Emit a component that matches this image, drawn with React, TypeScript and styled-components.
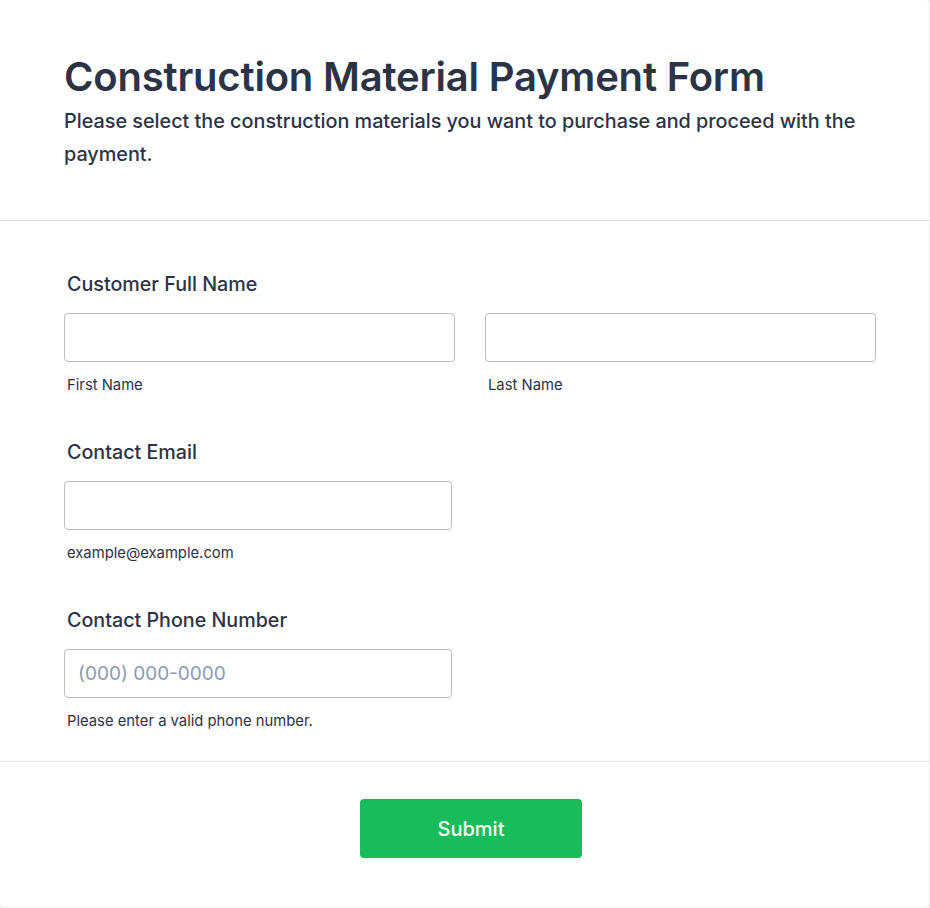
import styled, { createGlobalStyle } from 'styled-components'

const GlobalStyle = createGlobalStyle`
  html, body {
    margin: 0;
    padding: 0;
    background: #f3f3f7;
    font-family: Inter, 'Noto Sans', sans-serif;
    color: #2c3345;
  }
  * {
    box-sizing: border-box;
  }
`

const Card = styled.div`
  width: 929px;
  height: 907px;
  background: #ffffff;
  border-radius: 0 3px 3px 3px;
  box-shadow: 0 0 1px rgba(42, 49, 73, 0.25);
`

const Header = styled.div`
  padding: 53px 64px 49px 64px;
  border-bottom: 1px solid #d8dae3;
`

const Title = styled.h1`
  margin: 0;
  font-size: 40px;
  line-height: 48px;
  font-weight: 600;
  letter-spacing: -0.2px;
  color: #2c3345;
`

const Subtitle = styled.p`
  margin: 4px 0 0;
  font-size: 19.8px;
  line-height: 33px;
  font-weight: 500;
  color: #2c3345;
`

const Fields = styled.div`
  padding: 51px 54px 31px 64px;
  display: flex;
  flex-direction: column;
  gap: 46px;
  border-bottom: 1px solid #e6e7ec;
`

const Field = styled.div`
  display: flex;
  flex-direction: column;
`

const Label = styled.label`
  padding-left: 3px;
  font-size: 19.7px;
  line-height: 24px;
  font-weight: 500;
  color: #2c3345;
  margin-bottom: 17px;
`

const Row = styled.div`
  display: grid;
  grid-template-columns: 391px 391px;
  gap: 30px;
`

const Column = styled.div<{ $width?: number }>`
  display: flex;
  flex-direction: column;
  width: ${p => (p.$width ? `${p.$width}px` : 'auto')};
`

const Input = styled.input`
  height: 49px;
  width: 100%;
  border: 1px solid #b8bdc9;
  border-radius: 4px;
  padding: 0 13px;
  font-family: Inter, sans-serif;
  font-size: 19px;
  font-weight: 400;
  color: #2c3345;
  background: #fff;
  outline: none;

  &::placeholder {
    color: #8c9ab4;
  }
`

const Sublabel = styled.span`
  margin-top: 14px;
  padding-left: 3px;
  font-size: 14.8px;
  line-height: 18px;
  color: #2c3345;
`

const Footer = styled.div`
  display: flex;
  justify-content: center;
  padding-top: 37px;
  padding-left: 13px;
`

const SubmitButton = styled.button`
  width: 222px;
  height: 59px;
  border: none;
  border-radius: 4px;
  background: #18bd5b;
  color: #fff;
  font-family: Inter, sans-serif;
  font-size: 20px;
  font-weight: 500;
  cursor: pointer;
`

export default function App() {
  return (
    <>
      <GlobalStyle />
      <Card>
        <Header>
          <Title>Construction Material Payment Form</Title>
          <Subtitle>
            Please select the construction materials you want to purchase and proceed with the payment.
          </Subtitle>
        </Header>
        <Fields>
          <Field>
            <Label>Customer Full Name</Label>
            <Row>
              <Column>
                <Input type="text" />
                <Sublabel>First Name</Sublabel>
              </Column>
              <Column>
                <Input type="text" />
                <Sublabel>Last Name</Sublabel>
              </Column>
            </Row>
          </Field>
          <Field>
            <Label>Contact Email</Label>
            <Column $width={388}>
              <Input type="email" />
              <Sublabel>example@example.com</Sublabel>
            </Column>
          </Field>
          <Field>
            <Label>Contact Phone Number</Label>
            <Column $width={388}>
              <Input type="tel" placeholder="(000) 000-0000" />
              <Sublabel>Please enter a valid phone number.</Sublabel>
            </Column>
          </Field>
        </Fields>
        <Footer>
          <SubmitButton>Submit</SubmitButton>
        </Footer>
      </Card>
    </>
  )
}
